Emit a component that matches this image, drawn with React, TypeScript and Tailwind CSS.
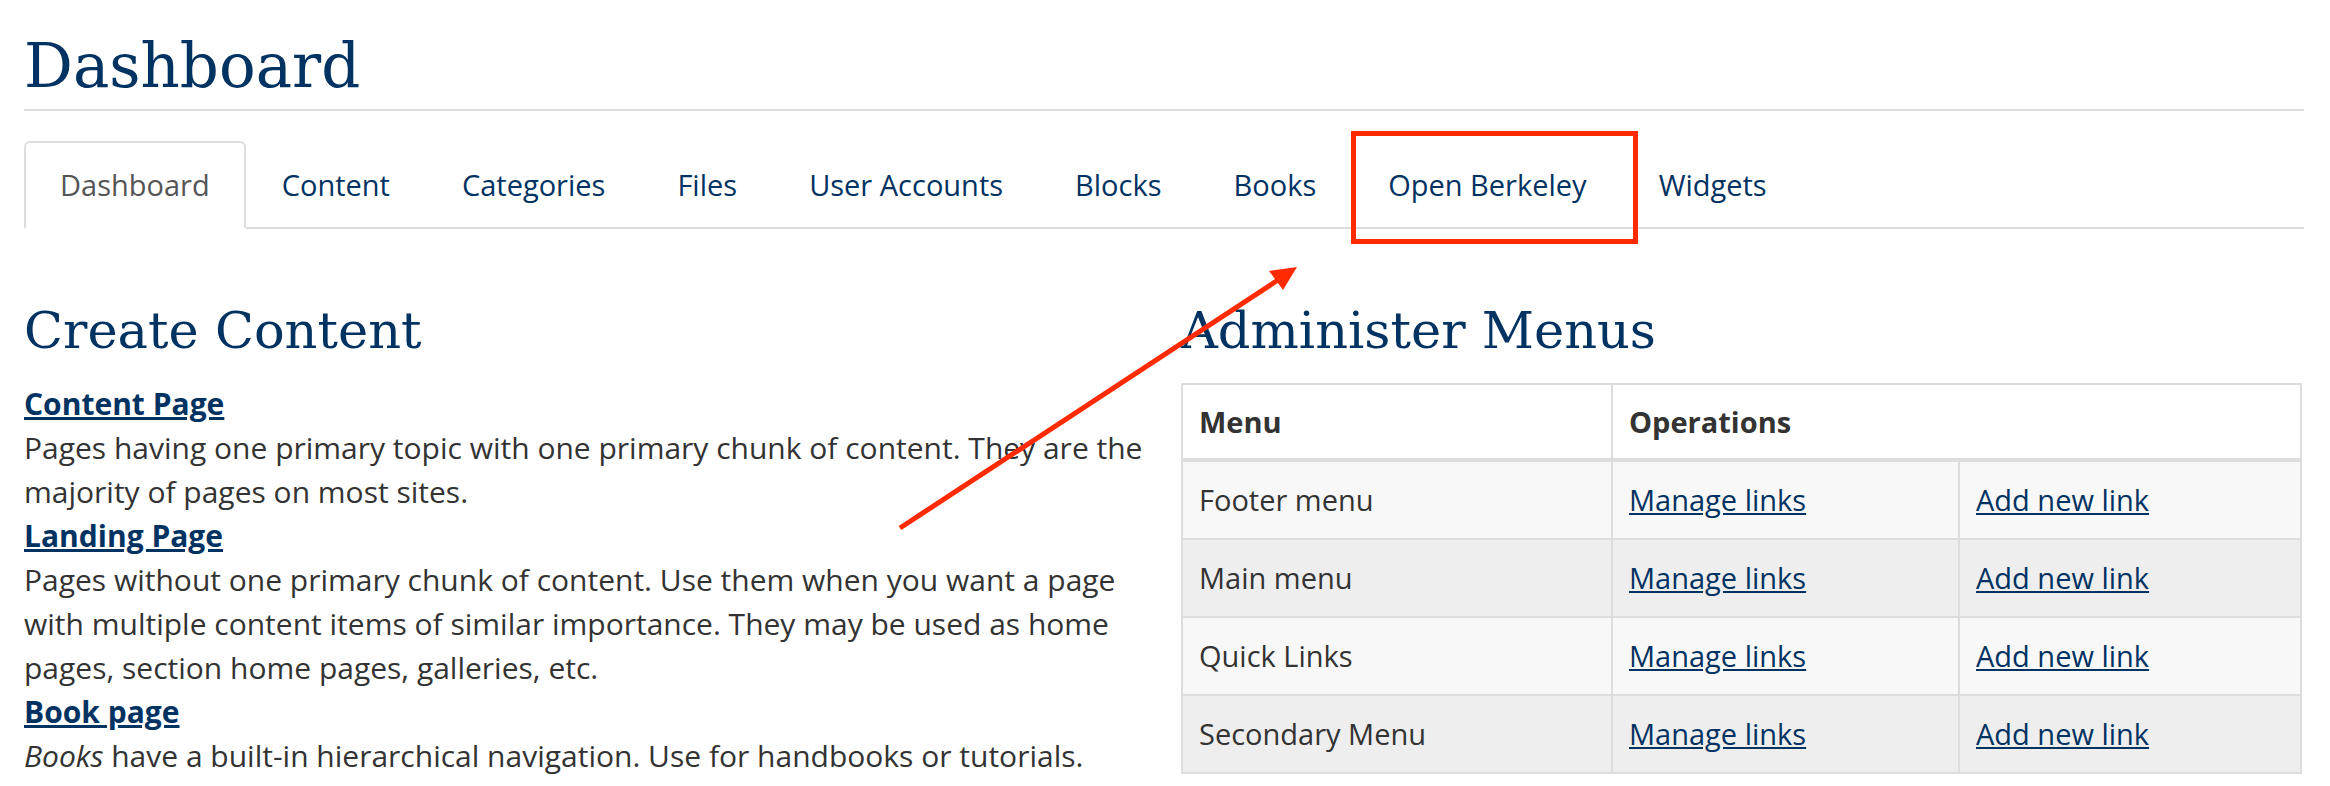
const tabs = [
  "Dashboard",
  "Content",
  "Categories",
  "Files",
  "User Accounts",
  "Blocks",
  "Books",
  "Open Berkeley",
  "Widgets",
]

const contentTypes = [
  {
    name: "Content Page",
    description: (
      <>
        Pages having one primary topic with one primary chunk of content. They
        are the majority of pages on most sites.
      </>
    ),
  },
  {
    name: "Landing Page",
    description: (
      <>
        Pages without one primary chunk of content. Use them when you want a
        page with multiple content items of similar importance. They may be used
        as home pages, section home pages, galleries, etc.
      </>
    ),
  },
  {
    name: "Book page",
    description: (
      <>
        <em>Books</em> have a built-in hierarchical navigation. Use for
        handbooks or tutorials.
      </>
    ),
  },
]

const menus = ["Footer menu", "Main menu", "Quick Links", "Secondary Menu"]

const serif = "font-['DejaVu_Serif',serif] text-[#003262] font-normal"

const Tabs = () => (
  <ul className="mt-[30px] flex border-b-2 border-[#ddd]">
    {tabs.map((tab, i) => (
      <li
        key={tab}
        className={
          i === 0
            ? "-mb-[2px] rounded-t-[6px] border-2 border-[#ddd] border-b-white bg-white px-[34px] py-[20px] text-[#555]"
            : "relative -mb-[2px] border-2 border-transparent px-[34px] py-[20px] text-[#003262]"
        }
      >
        {tab}
        {tab === "Open Berkeley" && (
          <span className="absolute -top-[12px] -right-[17px] -bottom-[17px] -left-[3px] border-[5px] border-[#ff2a00]" />
        )}
      </li>
    ))}
  </ul>
)

const CreateContent = () => (
  <section>
    <h2 className={`${serif} text-[51px] leading-[51px]`}>Create Content</h2>
    <dl className="mt-[26px] text-[30px] leading-[44px]">
      {contentTypes.map((type) => (
        <div key={type.name}>
          <dt>
            <a href="#" className="font-bold text-[#003262] underline">
              {type.name}
            </a>
          </dt>
          <dd>{type.description}</dd>
        </div>
      ))}
    </dl>
  </section>
)

const AdministerMenus = () => (
  <section>
    <h2 className={`${serif} text-[51px] leading-[51px]`}>Administer Menus</h2>
    <table className="mt-[27px] w-[1121px] border-collapse border-2 border-[#ddd] text-left">
      <thead>
        <tr className="border-b-4 border-[#ddd] bg-white">
          <th className="w-[430px] border-2 border-b-4 border-[#ddd] px-[16px] py-[15px] font-bold">
            Menu
          </th>
          <th
            colSpan={2}
            className="border-2 border-b-4 border-[#ddd] px-[16px] py-[15px] font-bold"
          >
            Operations
          </th>
        </tr>
      </thead>
      <tbody>
        {menus.map((menu, i) => (
          <tr key={menu} className={i % 2 === 0 ? "bg-[#f8f8f8]" : "bg-[#eee]"}>
            <td className="border-2 border-[#ddd] px-[16px] py-[16.25px]">{menu}</td>
            <td className="w-[347px] border-2 border-[#ddd] px-[16px] py-[16.25px]">
              <a href="#" className="text-[#003262] underline">
                Manage links
              </a>
            </td>
            <td className="border-2 border-[#ddd] px-[16px] py-[16.25px]">
              <a href="#" className="text-[#003262] underline">
                Add new link
              </a>
            </td>
          </tr>
        ))}
      </tbody>
    </table>
  </section>
)

const Arrow = () => (
  <svg
    className="pointer-events-none absolute inset-0 h-full w-full"
    viewBox="0 0 2330 786"
  >
    <line
      x1="900"
      y1="528"
      x2="1278"
      y2="280"
      stroke="#ff2a00"
      strokeWidth="5"
    />
    <polygon points="1297,267 1269,271 1283,290" fill="#ff2a00" />
  </svg>
)

const App = () => (
  <div className="relative min-h-[786px] w-[2330px] overflow-hidden bg-white pr-[26px] pl-[24px] font-['Open_Sans',sans-serif] text-[29px] leading-[43.5px] text-[#333]">
    <h1
      className={`${serif} border-b-2 border-[#ddd] pt-[35px] pb-[13px] text-[61px] leading-[61px]`}
    >
      Dashboard
    </h1>
    <Tabs />
    <div className="mt-[76px] grid grid-cols-[1134px_1fr] gap-[23px]">
      <CreateContent />
      <AdministerMenus />
    </div>
    <Arrow />
  </div>
)

export default App
